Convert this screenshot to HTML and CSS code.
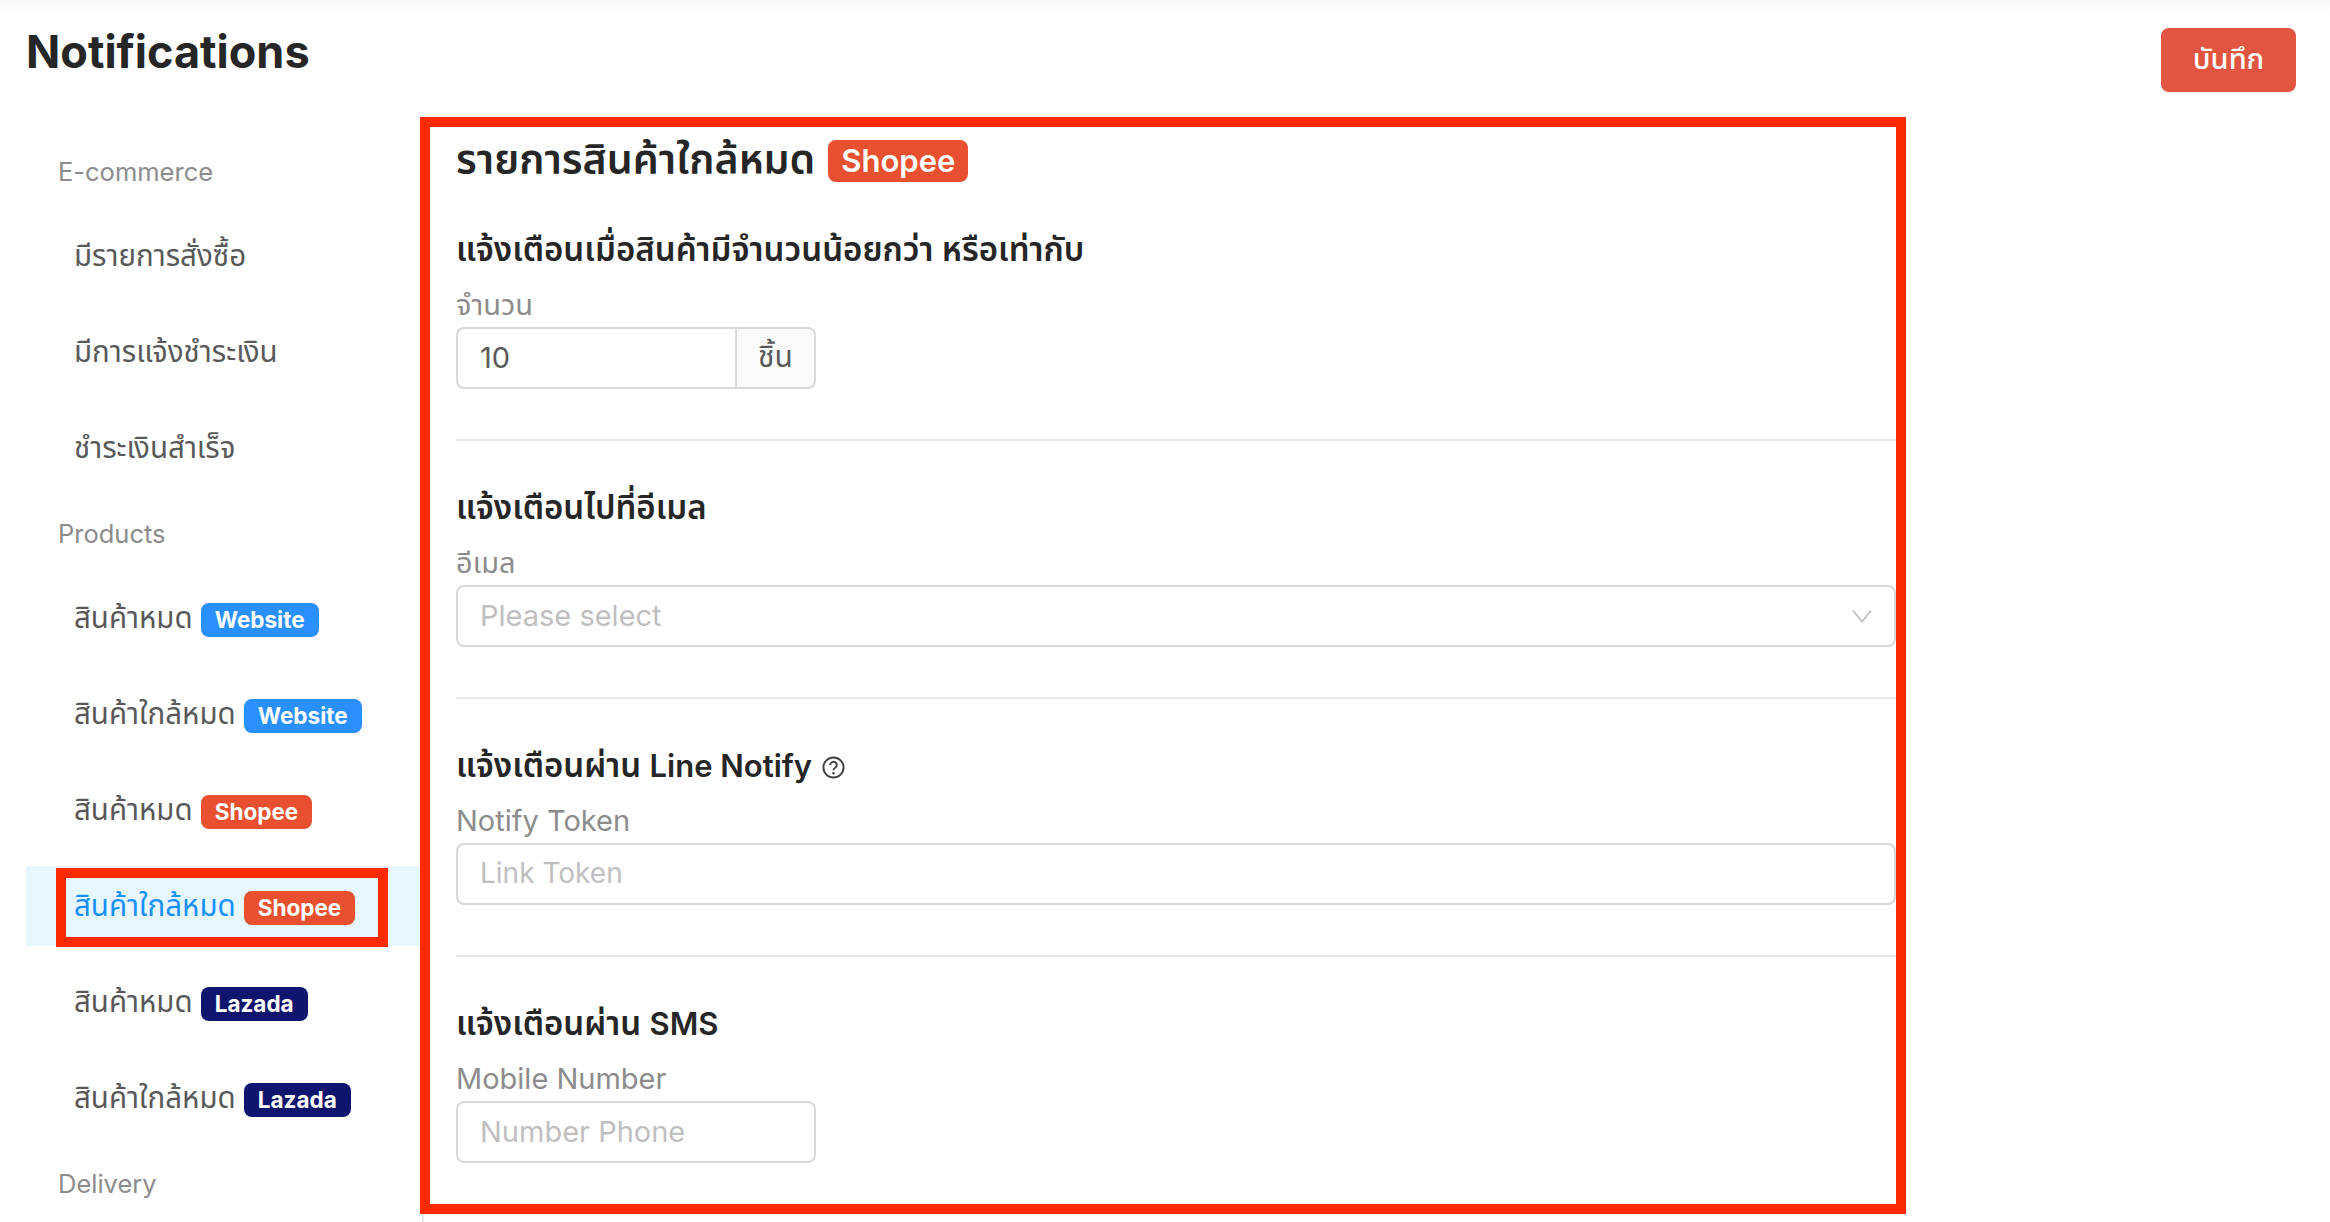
FILE: index.html
```html
<!DOCTYPE html>
<html lang="th">
<head>
<meta charset="utf-8">
<title>Notifications</title>
<link rel="stylesheet" href="styles.css">
</head>
<body>
<header class="header">
  <h1 class="page-title">Notifications</h1>
  <button class="save-btn" type="button">บันทึก</button>
</header>
<div class="content">
  <nav class="sidebar">
    <div class="group-label">E-commerce</div>
    <a class="item">มีรายการสั่งซื้อ</a>
    <a class="item">มีการแจ้งชำระเงิน</a>
    <a class="item">ชำระเงินสำเร็จ</a>
    <div class="group-label">Products</div>
    <a class="item">สินค้าหมด <span class="tag website">Website</span></a>
    <a class="item">สินค้าใกล้หมด <span class="tag website">Website</span></a>
    <a class="item">สินค้าหมด <span class="tag shopee">Shopee</span></a>
    <a class="item active">สินค้าใกล้หมด <span class="tag shopee">Shopee</span><span class="mark mark-item"></span></a>
    <a class="item">สินค้าหมด <span class="tag lazada">Lazada</span></a>
    <a class="item">สินค้าใกล้หมด <span class="tag lazada">Lazada</span></a>
    <div class="group-label">Delivery</div>
  </nav>
  <main class="main">
    <span class="mark mark-main"></span>
    <h2 class="main-title">รายการสินค้าใกล้หมด <span class="tag tag-large shopee">Shopee</span></h2>
    <section class="section">
      <h3 class="section-title">แจ้งเตือนเมื่อสินค้ามีจำนวนน้อยกว่า หรือเท่ากับ</h3>
      <label class="field-label">จำนวน</label>
      <div class="input-group">
        <input class="input input-joined" type="text" value="10">
        <span class="addon">ชิ้น</span>
      </div>
    </section>
    <section class="section">
      <h3 class="section-title">แจ้งเตือนไปที่อีเมล</h3>
      <label class="field-label">อีเมล</label>
      <div class="select">
        <span class="select-placeholder">Please select</span>
        <svg class="chevron" viewBox="0 0 20 14" width="20" height="14" aria-hidden="true"><path d="M1 1.5 L10 12.5 L19 1.5" fill="none" stroke="#bfbfbf" stroke-width="1.8"/></svg>
      </div>
    </section>
    <section class="section">
      <h3 class="section-title"><span class="title-text">แจ้งเตือนผ่าน <span class="latin">Line Notify</span></span>
        <svg class="help" viewBox="0 0 24 24" width="23" height="23" aria-hidden="true"><circle cx="12" cy="12" r="10.5" fill="none" stroke="#434343" stroke-width="2"/><path d="M8.6 9.4a3.4 3.4 0 1 1 5.2 2.9c-1.1.7-1.8 1.3-1.8 2.6" fill="none" stroke="#434343" stroke-width="2"/><circle cx="12" cy="18" r="1.3" fill="#434343"/></svg>
      </h3>
      <label class="field-label">Notify Token</label>
      <input class="input input-small" type="text" placeholder="Link Token">
    </section>
    <section class="section section-last">
      <h3 class="section-title"><span class="title-text">แจ้งเตือนผ่าน <span class="latin">SMS</span></span></h3>
      <label class="field-label">Mobile Number</label>
      <input class="input input-short" type="text" placeholder="Number Phone">
    </section>
  </main>
</div>
</body>
</html>
```
FILE: styles.css
```css
* { box-sizing: border-box; }
html, body { margin: 0; height: 1222px; overflow: hidden; background: #fff; }
body { font-family: "Inter", "Noto Sans", "Noto Sans Thai", sans-serif; color: #262626; }

.header {
  height: 117px;
  display: flex;
  justify-content: space-between;
  align-items: flex-start;
  padding: 28px 34px 0 26px;
  background: linear-gradient(#f6f6f6 0, #fdfdfd 8px, #fff 12px);
}
.page-title { margin: 0; font-size: 45px; line-height: 48px; font-weight: 700; color: #262626; letter-spacing: 0; }
.save-btn {
  width: 135px; height: 64px;
  padding: 0 0 3px;
  border: 0; border-radius: 8px;
  background: #e25641; color: #fff;
  font-family: inherit; font-size: 29px; font-weight: 500; line-height: 1;
  box-shadow: 0 2px 1px rgba(0,0,0,.05);
}

.content { display: flex; }
.sidebar {
  width: 398px; height: 1105px;
  margin-left: 26px;
  padding-top: 25px;
  border-right: 2px solid #e8e8e8;
}
.group-label {
  height: 58px; margin-bottom: 16px;
  padding-left: 32px;
  font-size: 25.5px; line-height: 60px;
  color: #8c8c8c;
}
.item {
  position: relative;
  display: flex; align-items: center; gap: 8px;
  height: 80px; margin-bottom: 16px;
  padding: 2px 0 0 48px;
  font-size: 29.5px; color: #595959;
}
.item.active { background: #e6f7ff; color: #1890ff; }

.tag {
  display: inline-block;
  height: 34px; margin-top: 2px; padding: 0 14px;
  border-radius: 8px;
  color: #fff;
  font-size: 22.5px; line-height: 33px; font-weight: 700;
}
.website { background: #2a8fff; }
.shopee { background: #e9502f; }
.lazada { background: #0f146d; }
.tag-large { height: 42px; margin-top: 0; padding: 0 13px; font-size: 31px; line-height: 41px; font-weight: 600; }

.mark { position: absolute; border: 10px solid #fb2a00; pointer-events: none; }
.mark-item { left: 30px; top: 2px; width: 332px; height: 79px; }
.mark-main { left: -4px; top: 0; width: 1486px; height: 1097px; }

.main { position: relative; width: 1472px; padding: 23px 0 0 32px; }
.main-title {
  display: flex; align-items: center; gap: 13px;
  height: 42px; margin: 0 0 44px;
  font-size: 41px; font-weight: 600; color: #262626;
}
.section { padding-bottom: 50px; margin-bottom: 43px; border-bottom: 2px solid #e8e8e8; }
.section-last { border-bottom: 0; padding-bottom: 0; margin-bottom: 0; }
.section-title {
  display: flex; align-items: center; gap: 10px;
  height: 48px; margin: 0 0 14px; padding-top: 2px;
  font-size: 33px; font-weight: 600; color: #262626;
}
.latin { font-size: 31px; }
.help { flex: none; }
.field-label { display: block; height: 34px; margin-bottom: 5px; font-size: 29px; line-height: 34px; color: #8c8c8c; }
.input {
  display: block; width: 100%; height: 62px;
  padding: 0 22px 2px;
  border: 2px solid #d9d9d9; border-radius: 8px;
  background: #fff;
  font-family: inherit; font-size: 29px; color: #595959;
  outline: 0;
}
.input::placeholder { color: #bfbfbf; opacity: 1; }
.input-small { font-size: 28px; }
.input-short { width: 360px; }
.input-group { display: flex; width: 360px; height: 62px; }
.input-joined { flex: 1; min-width: 0; border-right: 0; border-radius: 8px 0 0 8px; }
.addon {
  display: flex; align-items: center; justify-content: center;
  width: 81px;
  border: 2px solid #d9d9d9; border-radius: 0 8px 8px 0;
  background: #fafafa;
  font-size: 30px; color: #595959;
}
.select {
  display: flex; align-items: center; justify-content: space-between;
  height: 62px; padding: 0 22px 2px;
  border: 2px solid #d9d9d9; border-radius: 8px;
  font-size: 29px;
}
.select-placeholder { color: #bfbfbf; }
.chevron { flex: none; margin-top: 2px; }
```
